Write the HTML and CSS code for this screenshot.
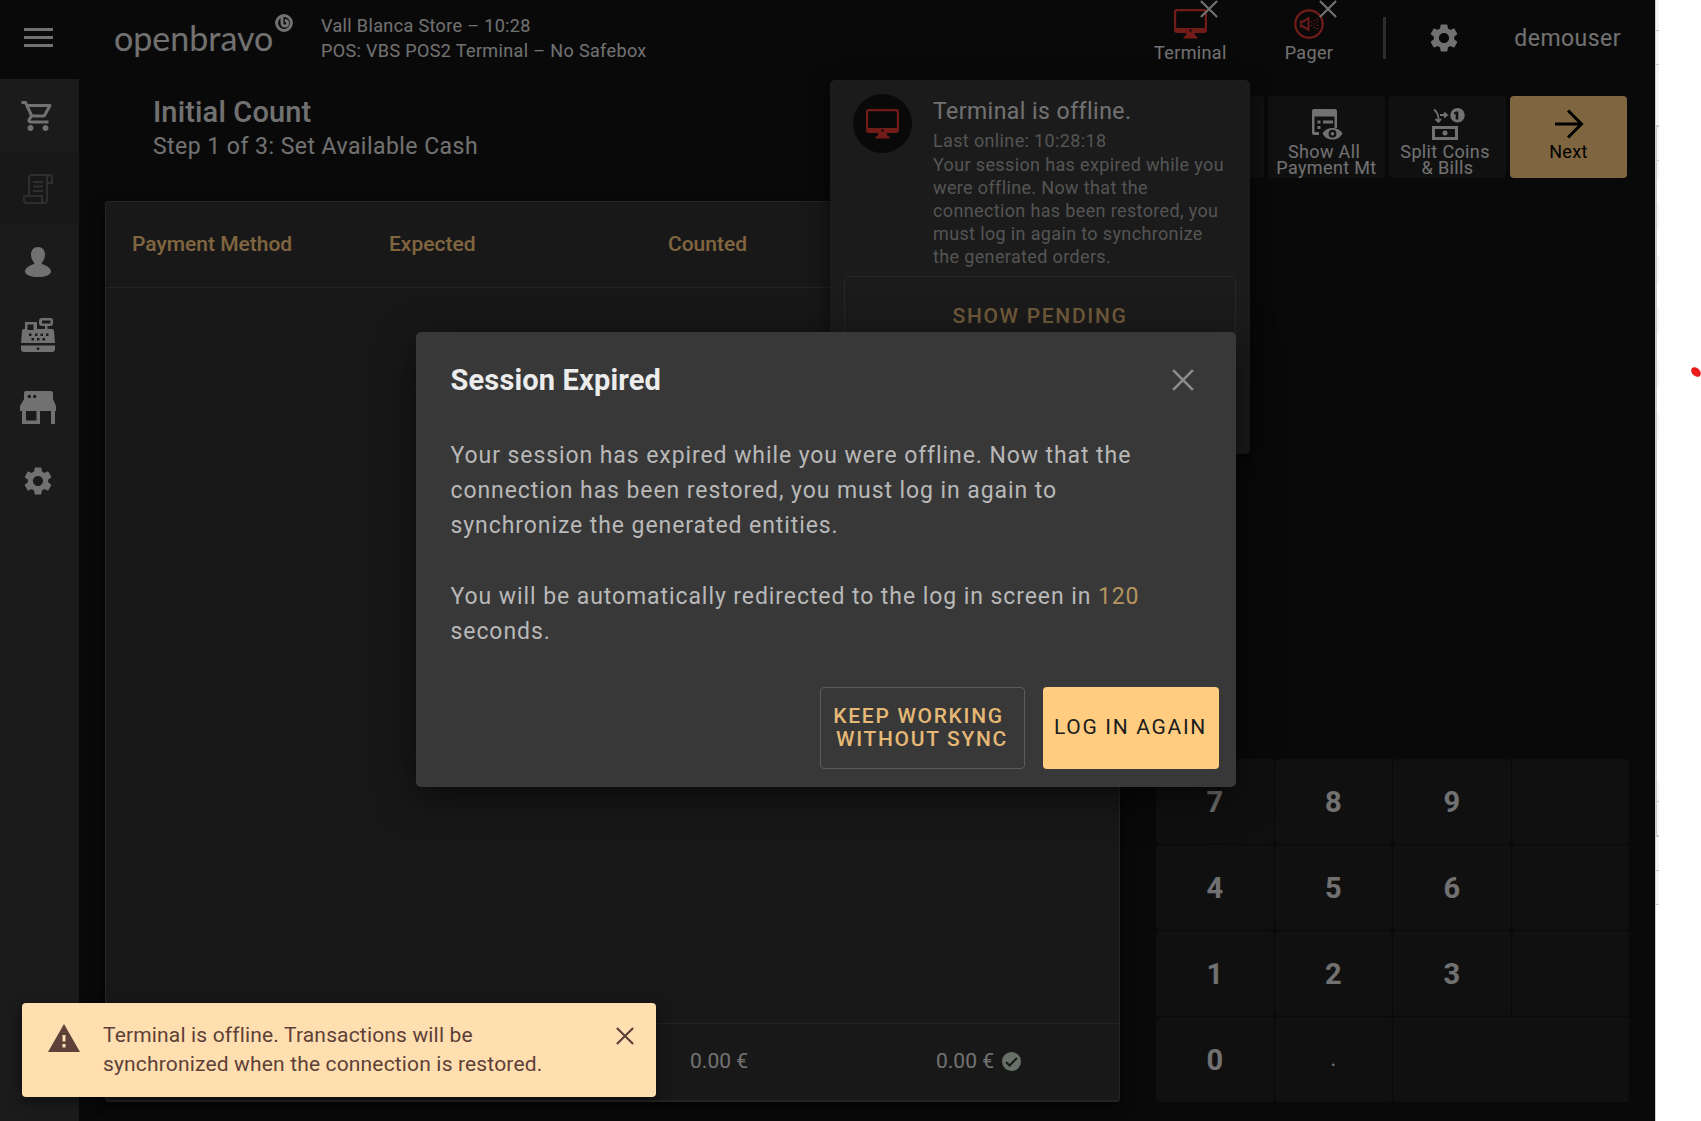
FILE: index.html
```html
<!DOCTYPE html>
<html lang="en">
<head>
    <meta charset="UTF-8">
    <meta name="viewport" content="width=device-width, initial-scale=1.0">
    <title>Openbravo POS - Initial Count</title>
    <link rel="stylesheet" href="styles.css">
</head>
<body>
    <!-- shared icons -->
    <svg class="sprite" aria-hidden="true">
        <symbol id="icon-gear" viewBox="0 0 24 24">
            <path d="M19.14 12.94c.04-.3.06-.61.06-.94 0-.32-.02-.64-.07-.94l2.03-1.58c.18-.14.23-.41.12-.61l-1.92-3.32c-.12-.22-.37-.29-.59-.22l-2.39.96c-.5-.38-1.03-.7-1.62-.94l-.36-2.54c-.04-.24-.24-.41-.48-.41h-3.84c-.24 0-.43.17-.47.41l-.36 2.54c-.59.24-1.13.57-1.62.94l-2.39-.96c-.22-.08-.47 0-.59.22L2.74 8.87c-.12.21-.08.47.12.61l2.03 1.58c-.05.3-.09.63-.09.94s.02.64.07.94l-2.03 1.58c-.18.14-.23.41-.12.61l1.92 3.32c.12.22.37.29.59.22l2.39-.96c.5.38 1.03.7 1.62.94l.36 2.54c.05.24.24.41.48.41h3.84c.24 0 .44-.17.47-.41l.36-2.54c.59-.24 1.13-.56 1.62-.94l2.39.96c.22.08.47 0 .59-.22l1.92-3.32c.12-.22.07-.47-.12-.61l-2.01-1.58zM12 15.6c-1.98 0-3.6-1.62-3.6-3.6s1.62-3.6 3.6-3.6 3.6 1.62 3.6 3.6-1.62 3.6-3.6 3.6z"/>
        </symbol>
        <symbol id="icon-terminal" viewBox="0 0 33 30">
            <path fill-rule="evenodd" d="M3 0h27a3 3 0 0 1 3 3v18a3 3 0 0 1-3 3H20.500l1 3H22a1.500 1.500 0 0 1 1.500 1.500V29.500H9.500V28.500A1.500 1.500 0 0 1 11 27h.5l1-3H3a3 3 0 0 1-3-3V3a3 3 0 0 1 3-3zM3.500 2.200A1.300 1.300 0 0 0 2.200 3.500V19h28.600V3.500a1.300 1.300 0 0 0-1.300-1.300zM16.500 20.300a1.200 1.200 0 1 0 0 2.400a1.200 1.200 0 1 0 0-2.400z"/>
        </symbol>
        <symbol id="icon-close" viewBox="0 0 20 20">
            <path d="M1 1l18 18M19 1L1 19" fill="none" stroke="currentColor" stroke-width="2.400"/>
        </symbol>
    </svg>

    <div class="app">
        <header class="topbar">
            <button class="icon-btn menu-btn" aria-label="Menu">
                <svg width="29" height="20" viewBox="0 0 29 20"><path d="M0 0h29v3H0zM0 8h29v3H0zM0 16h29v3H0z"/></svg>
            </button>
            <div class="logo">
                <span class="logo-name">openbravo</span>
                <svg class="logo-mark" width="18" height="18" viewBox="0 0 18 18">
                    <circle cx="9" cy="9" r="7.400"/>
                    <path d="M7 2v7.500a2.800 2.800 0 1 0 2.800-3"/>
                </svg>
            </div>
            <div class="store-info">
                <div>Vall Blanca Store – 10:28</div>
                <div>POS: VBS POS2 Terminal – No Safebox</div>
            </div>
            <div class="devices">
                <button class="device">
                    <svg class="device-icon" width="33" height="30"><use href="#icon-terminal"/></svg>
                    <svg class="device-off" width="18" height="18"><use href="#icon-close"/></svg>
                    <span>Terminal</span>
                </button>
                <button class="device">
                    <svg class="device-icon" width="30" height="30" viewBox="0 0 30 30">
                        <g fill="none" stroke="currentColor">
                            <circle cx="15" cy="15" r="13.700" stroke-width="2.200"/>
                            <path d="M7 12.500h2.500L14.500 9v12L9.500 17.500H7z" stroke-width="1.800"/>
                            <path d="M17.500 12.500v1M17.500 16v1M20.500 11v1M20.500 14.500v1M20.500 18v1M23.500 9.500v1M23.500 12.500v1M23.500 16v1M23.500 19v1" stroke-width="1.800"/>
                        </g>
                    </svg>
                    <svg class="device-off" width="18" height="18"><use href="#icon-close"/></svg>
                    <span>Pager</span>
                </button>
            </div>
            <span class="divider"></span>
            <button class="icon-btn settings-btn" aria-label="Settings"><svg width="34" height="34"><use href="#icon-gear"/></svg></button>
            <a class="user" href="#">demouser</a>
        </header>

        <div class="body">
            <nav class="sidebar">
                <a href="#" aria-label="Sales">
                    <svg width="36" height="36" viewBox="0 0 24 24"><path d="M15.550 13c.75 0 1.410-.41 1.750-1.030l3.580-6.490A.996.996 0 0 0 20.010 4H5.210l-.94-2H1v2h2l3.600 7.590-1.350 2.440C4.520 15.370 5.480 17 7 17h12v-2H7l1.100-2h7.450zM6.160 6h12.150l-2.760 5H8.530L6.160 6zM7 18c-1.100 0-1.990.9-1.990 2S5.900 22 7 22s2-.9 2-2-.9-2-2-2zm10 0c-1.100 0-1.990.9-1.990 2s.89 2 1.990 2 2-.9 2-2-.9-2-2-2z"/></svg>
                </a>
                <a href="#" class="disabled" aria-label="Receipts">
                    <svg width="30" height="30" viewBox="0 0 30 30"><path d="M6 21V4a3 3 0 0 1 3-3h17a3 3 0 0 1 3 3v5h-5M24 9V4a3 3 0 0 1 2-3M24 9v17a3 3 0 0 1-3 3H4a3 3 0 0 1-3-3v-4h18v4a3 3 0 0 0 2 3M10 8h10M10 12.500h10M10 17h10" fill="none" stroke="currentColor" stroke-width="2"/></svg>
                </a>
                <a href="#" aria-label="Customers">
                    <svg width="26" height="30" viewBox="0 0 26 30"><path d="M13 0c4.500 0 7 3.500 7 7.500 0 3.500-1.300 6-3.200 8v1.500c4.500 1.500 9.200 4 9.200 7.500C26 28 20 30 13 30S0 28 0 24.500C0 21 4.700 18.500 9.200 17v-1.500C7.300 13.500 6 11 6 7.500 6 3.500 8.500 0 13 0z"/></svg>
                </a>
                <a href="#" aria-label="Cash register">
                    <svg width="34" height="34" viewBox="0 0 34 34"><path fill-rule="evenodd" d="M4 4h12v7h8V8h-3a3 3 0 0 1-3-3V3a3 3 0 0 1 3-3h8a3 3 0 0 1 3 3v2a3 3 0 0 1-3 3h-2.500v3H31a2 2 0 0 1 2 2l1 12H0l1-12a2 2 0 0 1 2-2h1zM6.500 6.500V12h6V6.500zM21 2.500v3h8.500v-3zM8 15.500h2.500V18H8zM14 15.500h2.500V18H14zM19.500 15.500H22V18h-2.500zM25 15.500h2.500V18H25zM10.500 20H13v2.500h-2.500zM16 20h2.500v2.500H16zM21.500 20H24v2.500h-2.500zM0 27.500h34V31a3 3 0 0 1-3 3H3a3 3 0 0 1-3-3zM15.800 29.500v2.500h2.500v-2.500z"/></svg>
                </a>
                <a href="#" aria-label="Store">
                    <svg width="36" height="33" viewBox="0 0 36 33"><path fill-rule="evenodd" d="M6 0h25a2 2 0 0 1 2 2v6l3 7v5h-1v13h-4V20H20v13H2V20H0v-5l4-7V2a2 2 0 0 1 2-2zM6 20v9.500h10.500V20zM9.300 3.800a1.700 1.700 0 1 0 0 3.400a1.700 1.700 0 1 0 0-3.400zM14.700 3.800a1.700 1.700 0 1 0 0 3.400a1.700 1.700 0 1 0 0-3.400z"/></svg>
                </a>
                <a href="#" aria-label="Settings"><svg width="34" height="34"><use href="#icon-gear"/></svg></a>
            </nav>

            <main class="content">
                <div class="page-head">
                    <div>
                        <h1>Initial Count</h1>
                        <p class="step">Step 1 of 3: Set Available Cash</p>
                    </div>
                    <div class="actions">
                        <button class="action" aria-label="More"></button>
                        <button class="action">
                            <svg width="32" height="32" viewBox="0 0 32 32"><path fill-rule="evenodd" d="M3 1h21a2 2 0 0 1 2 2v17h-2.500V8.500h-20V24H8v3H3a2 2 0 0 1-2-2V3a2 2 0 0 1 2-2zM6.500 12.500h3v3h-3zM12 12.500h10v3H12zM6.500 18h3v3h-3zM11.500 25.500C14 21.500 17.500 20 21.500 20S29 21.500 31.500 25.500C29 30 25.500 31.500 21.500 31.500S14 30 11.500 25.500zM21.500 21.800a3.900 3.900 0 1 0 0 7.800a3.900 3.900 0 1 0 0-7.800zM21.500 24a1.800 1.800 0 1 1 0 3.600a1.800 1.800 0 1 1 0-3.600z"/></svg>
                            <span>Show All&nbsp;<br>Payment Mt</span>
                        </button>
                        <button class="action">
                            <svg width="34" height="32" viewBox="0 0 34 32">
                                <path fill-rule="evenodd" d="M1 18h26v14H1zM4 21v8h20v-8zM14 22.500a2.500 2.500 0 1 1 0 5a2.500 2.500 0 1 1 0-5zM26.500 0a7 7 0 1 1 0 14.500a7 7 0 1 1 0-14.500zM25 3.500l-2 1V6.500l1.700-.6V11.500h2.600v-8z"/>
                                <path d="M3 1.500c4 3 5 6 4.500 12M4.500 11l3 3 2.500-3M9 7h6M13 4.500L16 7l-3 2.500" fill="none" stroke="currentColor" stroke-width="1.800"/>
                            </svg>
                            <span>Split Coins&nbsp;<br>&amp; Bills</span>
                        </button>
                        <button class="action primary">
                            <svg width="32" height="32" viewBox="0 0 32 32"><path d="M2 16h26M15 2.500L28.500 16L15 29.500" fill="none" stroke="currentColor" stroke-width="3"/></svg>
                            <span>Next</span>
                        </button>
                    </div>
                </div>

                <div class="columns">
                    <section class="panel">
                        <table class="count-head">
                            <thead>
                                <tr>
                                    <th class="col-method" scope="col">Payment Method</th>
                                    <th class="col-expected" scope="col">Expected</th>
                                    <th scope="col">Counted</th>
                                </tr>
                            </thead>
                        </table>
                        <div class="panel-foot">
                            <span class="total">0.00 €</span>
                            <span class="total">0.00 €
                                <svg width="19" height="19" viewBox="0 0 19 19"><circle cx="9.500" cy="9.500" r="9.500" fill="#cde0cf"/><path d="M4 10l3.500 3.500L15 6" fill="none" stroke="#303030" stroke-width="2"/></svg>
                            </span>
                        </div>
                    </section>

                    <section class="keypad">
                        <button>7</button><button>8</button><button>9</button><button aria-label="Blank"></button>
                        <button>4</button><button>5</button><button>6</button><button aria-label="Blank"></button>
                        <button>1</button><button>2</button><button>3</button><button aria-label="Blank"></button>
                        <button>0</button><button class="dot">.</button><button class="wide" aria-label="Enter"></button>
                    </section>
                </div>
            </main>
        </div>

        <div class="popover">
            <div class="notice">
                <span class="notice-icon"><svg width="33" height="30"><use href="#icon-terminal"/></svg></span>
                <div class="notice-text">
                    <h2>Terminal is offline.</h2>
                    <p>Last online: 10:28:18</p>
                    <p>Your session has expired while you were offline. Now that the connection has been restored, you must log in again to synchronize the generated orders.</p>
                </div>
            </div>
            <button class="pending-btn">SHOW PENDING</button>
        </div>

        <div class="overlay">
            <div class="dialog" role="dialog" aria-labelledby="dialogTitle">
                <div class="dialog-head">
                    <h2 id="dialogTitle">Session Expired</h2>
                    <button class="icon-btn" aria-label="Close"><svg width="22" height="22"><use href="#icon-close"/></svg></button>
                </div>
                <div class="dialog-body">
                    <p>Your session has expired while you were offline. Now that the connection has been restored, you must log in again to synchronize the generated entities.</p>
                    <p>You will be automatically redirected to the log in screen in <span class="seconds">120</span> seconds.</p>
                </div>
                <div class="dialog-actions">
                    <button class="btn outlined">KEEP WORKING&nbsp;<br>WITHOUT SYNC</button>
                    <button class="btn filled">LOG IN AGAIN</button>
                </div>
            </div>
        </div>

        <div class="toast" role="alert">
            <svg width="32" height="28" viewBox="0 0 32 28"><path fill-rule="evenodd" d="M16 0l16 28H0zM14.500 11v6.500h3V11zM14.500 20v3.500h3V20z"/></svg>
            <p>Terminal is offline. Transactions will be synchronized when the connection is restored.</p>
            <button class="icon-btn" aria-label="Dismiss"><svg width="18" height="18"><use href="#icon-close"/></svg></button>
        </div>
    </div>

    <aside class="margin">
        <svg width="46" height="1121" viewBox="0 0 46 1121">
            <path d="M0 0h4v178H0zM0 203h4v26H0zM0 256h4v26H0zM0 308h4v26H0zM0 361h4v26H0zM0 413h4v26H0zM0 781h4v123H0z" fill="#f3f4f6"/>
            <path d="M0 0h1v126H0zM0 126h2v710H0zM0 836h1v285H0zM0 30h4v1H0zM0 64h4v1H0zM0 125h4v2H0zM0 160h4v1H0zM0 801h4v1H0zM0 835h4v2H0zM0 870h4v1H0zM0 904h4v1H0z" fill="#c8cbd0"/>
            <ellipse cx="41" cy="372" rx="5.500" ry="4" transform="rotate(45 41 372)" fill="#e81c1c"/>
        </svg>
    </aside>
</body>
</html>
```
FILE: styles.css
```css
:root {
    --bg: #121212;
    --surface: #363636;
    --panel: #303030;
    --tile: #202020;
    --text: #e2e2e2;
    --accent: #ffcc80;
    --error: #e53935;
}

* {
    box-sizing: border-box;
}

body {
    margin: 0;
    display: flex;
    height: 100vh;
    overflow: hidden;
    background-color: #ffffff;
    color: var(--text);
    font-family: Roboto, "Liberation Sans", sans-serif;
    letter-spacing: 0.01em;
}

h1, h2, p {
    margin: 0;
}

h1, h2 {
    font-weight: 500;
}

button {
    padding: 0;
    border: none;
    background: none;
    color: inherit;
    font: inherit;
    letter-spacing: inherit;
    cursor: pointer;
}

a {
    color: inherit;
    text-decoration: none;
}

svg {
    display: block;
    flex: none;
    fill: currentColor;
}

.sprite {
    position: absolute;
    width: 0;
    height: 0;
}

.app {
    position: relative;
    flex: 1;
    display: flex;
    flex-direction: column;
    background-color: var(--bg);
}

.margin {
    flex: none;
    width: 46px;
    overflow: hidden;
}

/* top bar */
.topbar {
    flex: none;
    display: flex;
    align-items: center;
    height: 79px;
    padding: 0 34px 3px 24px;
}

.menu-btn {
    margin-right: 61px;
}

.logo {
    display: flex;
    align-items: center;
    gap: 2px;
    width: 207px;
}

.logo-name {
    font-family: Lato, sans-serif;
    font-size: 34px;
    line-height: 40px;
    letter-spacing: normal;
}

.logo-mark {
    align-self: flex-start;
    margin-top: -4px;
    fill: none;
    stroke: currentColor;
    stroke-width: 3;
}

.store-info {
    font-size: 18px;
    line-height: 25px;
    letter-spacing: 0.02em;
}

.devices {
    display: flex;
    align-self: flex-start;
    gap: 58px;
    margin: 9px 0 0 auto;
}

.device {
    position: relative;
    display: flex;
    flex-direction: column;
    align-items: center;
    gap: 4px;
    font-size: 18px;
    line-height: 20px;
    letter-spacing: 0.02em;
}

.device-icon {
    color: var(--error);
}

.device-off {
    position: absolute;
    top: -9px;
    left: calc(50% + 10px);
}

.divider {
    width: 3px;
    height: 42px;
    margin: 0 41px 0 50px;
    background-color: #5a5a5a;
}

.user {
    margin-left: 53px;
    font-size: 23px;
    letter-spacing: 0.02em;
}

.body {
    flex: 1;
    display: flex;
    min-height: 0;
}

/* sidebar */
.sidebar {
    flex: none;
    width: 79px;
    background-color: var(--surface);
}

.sidebar a {
    display: flex;
    align-items: center;
    justify-content: center;
    height: 73px;
    padding-right: 3px;
}

.sidebar .disabled {
    background-color: #303030;
    color: #5c5c5c;
}

/* content */
.content {
    flex: 1;
    display: flex;
    flex-direction: column;
    padding: 0 26px 19px;
}

.page-head {
    display: flex;
    justify-content: space-between;
    height: 122px;
    padding: 17px 2px 0 48px;
}

h1 {
    font-size: 29px;
    line-height: 32px;
}

.step {
    padding-top: 2px;
    font-size: 23px;
    line-height: 34px;
    letter-spacing: 0.02em;
}

.actions {
    display: flex;
    gap: 4px;
}

.action {
    display: flex;
    flex-direction: column;
    align-items: center;
    gap: 4px;
    width: 117px;
    height: 82px;
    padding-top: 12px;
    overflow: hidden;
    border-radius: 4px;
    background-color: var(--tile);
    font-size: 18px;
    line-height: 16px;
    letter-spacing: 0.02em;
}

.action.primary {
    background-color: var(--accent);
    color: #000000;
}

.columns {
    flex: 1;
    display: grid;
    grid-template-columns: 1015fr 473fr;
    gap: 36px;
}

.panel {
    display: flex;
    flex-direction: column;
    justify-content: space-between;
    border: 1px solid #484848;
    border-bottom-width: 2px;
    border-radius: 4px;
    background-color: var(--panel);
    box-shadow: 0 4px 12px rgba(0, 0, 0, 0.6);
}

.count-head {
    width: 100%;
    border-collapse: collapse;
    table-layout: fixed;
    border-bottom: 1px solid #484848;
}

.count-head th {
    height: 85px;
    padding: 0 0 0 26px;
    color: var(--accent);
    font-size: 21px;
    font-weight: 500;
    letter-spacing: normal;
    text-align: left;
}

.col-method {
    width: 257px;
}

.col-expected {
    width: 279px;
}

.panel-foot {
    display: flex;
    justify-content: flex-end;
    align-items: center;
    gap: 188px;
    height: 77px;
    padding: 0 98px 2px 0;
    border-top: 1px solid #484848;
}

.total {
    display: flex;
    align-items: center;
    gap: 8px;
    font-size: 21px;
    letter-spacing: normal;
}

.keypad {
    align-self: end;
    display: grid;
    grid-template-columns: repeat(4, 1fr);
    grid-auto-rows: 85px;
    gap: 1px;
}

.keypad button {
    border-radius: 4px;
    background-color: var(--tile);
    font-size: 29px;
    font-weight: 700;
    letter-spacing: normal;
}

.keypad .dot {
    font-size: 18px;
    font-weight: 500;
}

.keypad .wide {
    grid-column: span 2;
}

/* terminal status popover */
.popover {
    position: absolute;
    top: 80px;
    right: 405px;
    width: 420px;
    height: 374px;
    padding: 14px;
    border-radius: 5px;
    background-color: var(--surface);
    box-shadow: 0 4px 20px rgba(0, 0, 0, 0.6);
}

.notice {
    display: flex;
    gap: 21px;
    padding: 0 9px;
}

.notice-icon {
    flex: none;
    display: flex;
    align-items: center;
    justify-content: center;
    width: 59px;
    height: 59px;
    border-radius: 50%;
    background-color: var(--bg);
    color: var(--error);
}

.notice-text {
    display: flex;
    flex-direction: column;
    gap: 1px;
    padding-top: 2px;
}

.notice h2 {
    font-size: 23px;
    font-weight: 400;
    line-height: 32px;
    letter-spacing: 0.02em;
}

.notice p {
    color: #a8a8a8;
    font-size: 18px;
    line-height: 23px;
    letter-spacing: 0.02em;
}

.pending-btn {
    width: 100%;
    height: 80px;
    margin-top: 8px;
    border: 1px solid #4a4a4a;
    border-radius: 4px;
    color: #e0b474;
    font-size: 21px;
    font-weight: 500;
    letter-spacing: 0.08em;
}

/* session dialog */
.overlay {
    position: absolute;
    inset: 0;
    display: flex;
    align-items: center;
    justify-content: center;
    padding: 0 4px 3px 0;
    background-color: rgba(0, 0, 0, 0.5);
}

.dialog {
    width: 820px;
    padding: 28px 17px 18px 35px;
    border-radius: 5px;
    background-color: #383838;
    box-shadow: 0 10px 40px rgba(0, 0, 0, 0.6);
}

.dialog-head {
    display: flex;
    align-items: center;
    justify-content: space-between;
    padding-right: 25px;
}

.dialog-head h2 {
    color: #ececec;
    font-size: 29px;
    font-weight: 700;
    line-height: 40px;
}

.dialog-head .icon-btn {
    color: #8c8c8c;
}

.dialog-body {
    display: flex;
    flex-direction: column;
    gap: 36px;
    padding: 38px 55px 38px 0;
    color: #b8b8b8;
    font-size: 23px;
    line-height: 35px;
    letter-spacing: 0.04em;
}

.seconds {
    color: #b4945f;
}

.dialog-actions {
    display: flex;
    justify-content: flex-end;
    gap: 18px;
}

.btn {
    height: 82px;
    border-radius: 4px;
    font-size: 21px;
    line-height: 23px;
    letter-spacing: 0.08em;
}

.btn.outlined {
    width: 205px;
    border: 1px solid #5c5c5c;
    color: #e5b876;
    font-weight: 500;
}

.btn.filled {
    width: 176px;
    background-color: var(--accent);
    color: #1c1c1c;
}

/* toast */
.toast {
    position: absolute;
    left: 22px;
    bottom: 24px;
    display: flex;
    align-items: flex-start;
    width: 634px;
    padding: 18px 22px 18px 26px;
    border-radius: 4px;
    background-color: #ffdeb0;
    color: #5d4037;
    box-shadow: 0 4px 14px rgba(0, 0, 0, 0.5);
    font-size: 21px;
    line-height: 29px;
}

.toast > svg {
    margin-top: 3px;
}

.toast p {
    flex: 1;
    padding: 0 60px 0 23px;
}

.toast .icon-btn {
    margin-top: 6px;
}
```
